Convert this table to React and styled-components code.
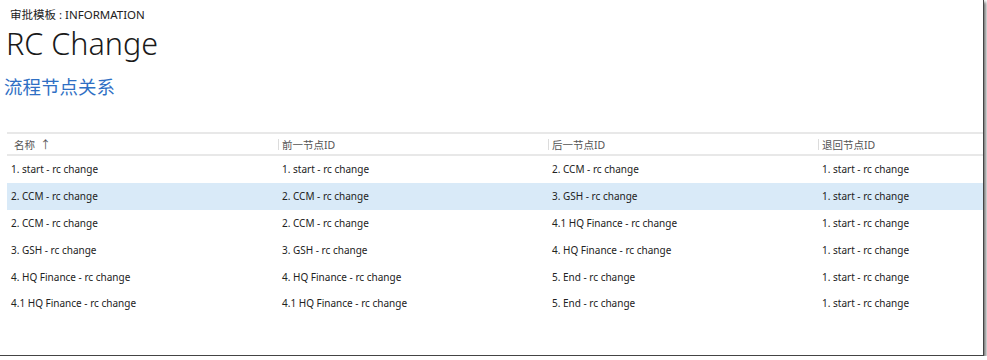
import React from 'react';
import styled, { createGlobalStyle } from 'styled-components';

const GlobalStyle = createGlobalStyle`
    html, body {
        margin: 0;
        padding: 0;
        background: #ffffff;
    }
    body {
        font-family: "Noto Sans", "Noto Sans CJK SC", sans-serif;
        color: #222;
    }
`;

const Frame = styled.div`
    box-sizing: border-box;
    width: 984px;
    height: 356px;
    background: #ffffff;
    border-right: 1px solid #444;
    border-bottom: 1px solid #444;
    box-shadow: 2px 2px 3px rgba(0, 0, 0, 0.55);
    overflow: hidden;
    padding-top: 7px;
`;

const Crumb = styled.div`
    font-size: 11.5px;
    line-height: 16px;
    color: #222;
    padding-left: 10px;
`;

const Title = styled.h1`
    margin: 0;
    padding-left: 6px;
    font-size: 30.5px;
    font-weight: 300;
    line-height: 40px;
    color: #1a1a1a;
`;

const Section = styled.h2`
    margin: 0;
    margin-top: 11px;
    padding-left: 4px;
    font-size: 18.5px;
    font-weight: 400;
    line-height: 26px;
    color: #2f6fc4;
`;

const Table = styled.div`
    margin-top: 32px;
    margin-left: 7px;
    border-top: 2px solid #e8e8e8;
`;

const HeadRow = styled.div`
    display: grid;
    grid-template-columns: 271px 270px 270px 1fr;
    height: 20px;
    align-items: center;
    border-bottom: 2px solid #e8e8e8;
`;

const HeadCell = styled.div`
    position: relative;
    font-size: 10.5px;
    color: #555;
    padding-left: ${p => (p.first ? '7px' : '4px')};

    &::before {
        content: '';
        display: ${p => (p.first ? 'none' : 'block')};
        position: absolute;
        left: 0;
        top: 2px;
        bottom: 2px;
        width: 1px;
        background: #dcdcdc;
    }
`;

const Arrow = styled.span`
    margin-left: 5px;
    font-size: 11px;
`;

const Row = styled.div`
    display: grid;
    grid-template-columns: 271px 270px 270px 1fr;
    height: 26.8px;
    align-items: center;
    background: ${p => (p.selected ? '#d9eaf8' : 'transparent')};
`;

const Cell = styled.div`
    font-size: 10px;
    color: #222;
    padding-left: 4px;
`;

const columns = ['名称', '前一节点ID', '后一节点ID', '退回节点ID'];

const rows = [
    ['1. start - rc change', '1. start - rc change', '2. CCM - rc change', '1. start - rc change'],
    ['2. CCM - rc change', '2. CCM - rc change', '3. GSH - rc change', '1. start - rc change'],
    ['2. CCM - rc change', '2. CCM - rc change', '4.1 HQ Finance - rc change', '1. start - rc change'],
    ['3. GSH - rc change', '3. GSH - rc change', '4. HQ Finance - rc change', '1. start - rc change'],
    ['4. HQ Finance - rc change', '4. HQ Finance - rc change', '5. End - rc change', '1. start - rc change'],
    ['4.1 HQ Finance - rc change', '4.1 HQ Finance - rc change', '5. End - rc change', '1. start - rc change'],
];

const App = () => {
    return (
        <>
            <GlobalStyle />
            <Frame>
                <Crumb>审批模板 : INFORMATION</Crumb>
                <Title>RC Change</Title>
                <Section>流程节点关系</Section>
                <Table>
                    <HeadRow>
                        {columns.map((c, i) => (
                            <HeadCell key={c} first={i === 0}>
                                {c}
                                {i === 0 && <Arrow>↑</Arrow>}
                            </HeadCell>
                        ))}
                    </HeadRow>
                    {rows.map((r, i) => (
                        <Row key={i} selected={i === 1}>
                            {r.map((v, j) => (
                                <Cell key={j}>{v}</Cell>
                            ))}
                        </Row>
                    ))}
                </Table>
            </Frame>
        </>
    );
};

export default App;
